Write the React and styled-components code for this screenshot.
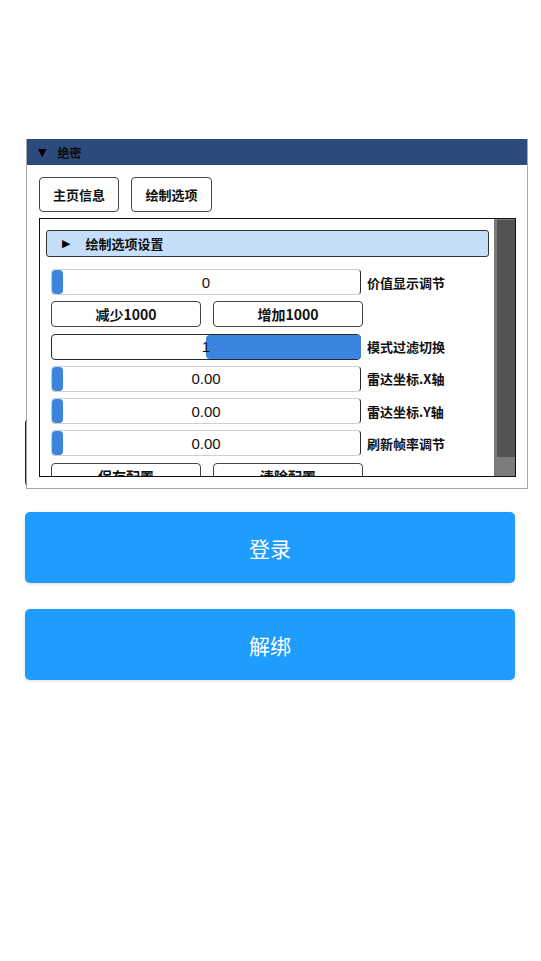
import React from "react";
import styled, { createGlobalStyle } from "styled-components";

const Global = createGlobalStyle`
  html, body { margin: 0; padding: 0; background: #fff; }
  body { font-family: "Liberation Sans", "Noto Sans CJK SC", sans-serif; }
  * { box-sizing: border-box; }
`;

const Page = styled.div`
  width: 541px;
  height: 961px;
  display: flex;
  flex-direction: column;
  padding-top: 139px;
`;

const Window = styled.div`
  position: relative;
  flex-shrink: 0;
  margin-left: 26px;
  width: 502px;
  height: 350px;
  border: 1px solid #a8a8a8;
  border-top: none;
  display: flex;
  flex-direction: column;
`;

const Grip = styled.div`
  position: absolute;
  left: -2px;
  top: 281px;
  width: 4px;
  height: 65px;
  border-left: 1px solid #222;
  border-radius: 3px 0 0 3px;
`;

const TitleBar = styled.div`
  flex-shrink: 0;
  height: 26px;
  background: #2c4a7b;
  display: flex;
  align-items: center;
  padding-left: 11px;
  gap: 11px;
  font-family: "Noto Sans CJK SC", sans-serif;
  font-weight: 700;
  font-size: 12px;
  color: #0a0a0a;
`;

const Tri = styled.span`
  font-size: 11px;
  color: #000;
  font-family: "DejaVu Sans", sans-serif;
`;

const Body = styled.div`
  flex: 1;
  min-height: 0;
  display: flex;
  flex-direction: column;
  padding: 12px 11px 11px 12px;
`;

const Tabs = styled.div`
  flex-shrink: 0;
  display: flex;
  gap: 12px;
  margin-bottom: 6px;
`;

const Tab = styled.div`
  width: ${p => p.w}px;
  height: 35px;
  border: 1px solid #444;
  border-radius: 4px;
  display: flex;
  align-items: center;
  justify-content: center;
  font-family: "Noto Sans CJK SC", sans-serif;
  font-weight: 700;
  font-size: 13px;
  color: #111;
`;

const Inner = styled.div`
  flex: 1;
  min-height: 0;
  border: 1px solid #111;
  display: flex;
  overflow: hidden;
`;

const Scroll = styled.div`
  flex: 1;
  overflow: hidden;
  padding: 11px 5px 0 6px;
`;

const Header = styled.div`
  height: 27px;
  background: #c5dffb;
  border: 1px solid #333;
  border-radius: 3px;
  display: flex;
  align-items: center;
  padding-left: 15px;
  gap: 15px;
  font-family: "Noto Sans CJK SC", sans-serif;
  font-weight: 700;
  font-size: 13px;
  color: #111;
  margin-bottom: 12px;
`;

const Rows = styled.div`
  display: flex;
  flex-direction: column;
  gap: 6.3px;
  padding-left: 5px;
`;

const Row = styled.div`
  display: flex;
  align-items: center;
  gap: 6px;
  height: 26px;
  flex-shrink: 0;
`;

const Slider = styled.div`
  position: relative;
  width: 310px;
  height: 26px;
  border: 1px solid ${p => (p.dark ? "#2a2a2a" : "#cfcfcf")};
  border-right-color: #2a2a2a;
  border-radius: 4px;
  display: flex;
  align-items: center;
  justify-content: center;
  font-size: 15px;
  color: #111;
  background: #fff;
`;

const Value = styled.span`
  position: relative;
  z-index: 1;
`;

const Knob = styled.div`
  position: absolute;
  top: 0;
  bottom: 0;
  left: ${p => p.left}px;
  width: ${p => p.w}px;
  background: #3b84e0;
  border-radius: 4px;
`;

const Label = styled.div`
  font-family: "Noto Sans CJK SC", sans-serif;
  font-weight: 700;
  font-size: 13px;
  color: #111;
  white-space: nowrap;
`;

const Btns = styled.div`
  display: flex;
  gap: 12px;
  flex-shrink: 0;
`;

const SmallBtn = styled.div`
  width: 150px;
  height: 26px;
  border: 1px solid #444;
  border-radius: 4px;
  display: flex;
  align-items: center;
  justify-content: center;
  font-family: "Noto Sans CJK SC", sans-serif;
  font-weight: 600;
  font-size: 14px;
  color: #111;
`;

const ScrollBar = styled.div`
  width: 21px;
  background: #7c7c7c;
  padding: 1px 0 0 3px;
`;

const Thumb = styled.div`
  height: 237px;
  background: #535353;
`;

const Actions = styled.div`
  margin-top: 23px;
  margin-left: 25px;
  width: 490px;
  display: flex;
  flex-direction: column;
  gap: 26px;
`;

const BigBtn = styled.div`
  height: 71px;
  background: #1f9cff;
  border-radius: 5px;
  box-shadow: 0 1px 3px rgba(0, 0, 0, 0.15);
  display: flex;
  align-items: center;
  justify-content: center;
  color: #fff;
  font-family: "Noto Sans CJK SC", sans-serif;
  font-size: 21px;
`;

const sliders = [
  { v: "0", label: "价值显示调节", knob: [0, 11] },
  "btns1",
  { v: "1", label: "模式过滤切换", knob: [154, 155], dark: true },
  { v: "0.00", label: "雷达坐标.X轴", knob: [0, 11] },
  { v: "0.00", label: "雷达坐标.Y轴", knob: [0, 11] },
  { v: "0.00", label: "刷新帧率调节", knob: [0, 11] },
  "btns2",
];

export default function App() {
  return (
    <>
      <Global />
      <Page>
        <Window>
          <Grip />
          <TitleBar>
            <Tri>▼</Tri>
            <span>绝密</span>
          </TitleBar>
          <Body>
            <Tabs>
              <Tab w={80}>主页信息</Tab>
              <Tab w={81}>绘制选项</Tab>
            </Tabs>
            <Inner>
              <Scroll>
                <Header>
                  <Tri>▶</Tri>
                  <span>绘制选项设置</span>
                </Header>
                <Rows>
                  {sliders.map((s, i) => {
                    if (s === "btns1")
                      return (
                        <Btns key={i}>
                          <SmallBtn>减少1000</SmallBtn>
                          <SmallBtn>增加1000</SmallBtn>
                        </Btns>
                      );
                    if (s === "btns2")
                      return (
                        <Btns key={i}>
                          <SmallBtn>保存配置</SmallBtn>
                          <SmallBtn>清除配置</SmallBtn>
                        </Btns>
                      );
                    return (
                      <Row key={i}>
                        <Slider dark={s.dark}>
                          <Value>{s.v}</Value>
                          <Knob left={s.knob[0]} w={s.knob[1]} />
                        </Slider>
                        <Label>{s.label}</Label>
                      </Row>
                    );
                  })}
                </Rows>
              </Scroll>
              <ScrollBar>
                <Thumb />
              </ScrollBar>
            </Inner>
          </Body>
        </Window>
        <Actions>
          <BigBtn>登录</BigBtn>
          <BigBtn>解绑</BigBtn>
        </Actions>
      </Page>
    </>
  );
}
